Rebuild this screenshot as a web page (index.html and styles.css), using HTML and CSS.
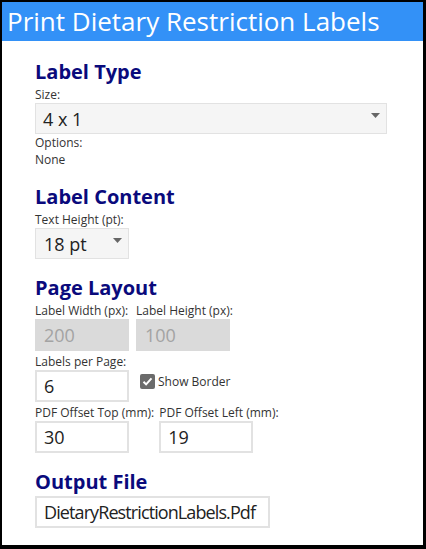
FILE: index.html
```html
<!DOCTYPE html>
<html lang="en">

<head>
  <meta charset="UTF-8">
  <meta name="viewport" content="width=device-width, initial-scale=1.0">
  <title>Print Dietary Restriction Labels</title>
  <link rel="stylesheet" href="styles.css">
</head>

<body>

  <div class="window">
    <div class="title-bar">Print Dietary Restriction Labels</div>

    <div class="content">
      <!-- 標籤種類 -->
      <section class="group">
        <h2>Label Type</h2>
        <p class="field-label">Size:</p>
        <div class="select select-wide">
          <span>4 x 1</span>
          <svg class="arrow" width="9" height="5" viewBox="0 0 9 5"><path d="M0 0h9L4.5 5z" /></svg>
        </div>
        <p class="field-label options-label">Options:</p>
        <p class="field-label">None</p>
      </section>

      <!-- 標籤內容 -->
      <section class="group">
        <h2>Label Content</h2>
        <p class="field-label">Text Height (pt):</p>
        <div class="select select-small">
          <span>18 pt</span>
          <svg class="arrow" width="9" height="5" viewBox="0 0 9 5"><path d="M0 0h9L4.5 5z" /></svg>
        </div>
      </section>

      <!-- 頁面配置 -->
      <section class="group">
        <h2>Page Layout</h2>
        <div class="row">
          <div class="field">
            <p class="field-label">Label Width (px):</p>
            <input class="text-box" type="text" value="200" disabled>
          </div>
          <div class="field">
            <p class="field-label">Label Height (px):</p>
            <input class="text-box" type="text" value="100" disabled>
          </div>
        </div>
        <div class="row row-check">
          <div class="field">
            <p class="field-label">Labels per Page:</p>
            <input class="text-box" type="text" value="6">
          </div>
          <label class="check">
            <span class="check-box">
              <svg width="15" height="15" viewBox="0 0 15 15"><path d="M3.5 7.8l2.6 2.6 5.4-6" /></svg>
            </span>
            Show Border
          </label>
        </div>
        <div class="row row-offset">
          <div class="field">
            <p class="field-label">PDF Offset Top (mm):</p>
            <input class="text-box" type="text" value="30">
          </div>
          <div class="field">
            <p class="field-label">PDF Offset Left (mm):</p>
            <input class="text-box" type="text" value="19">
          </div>
        </div>
      </section>

      <!-- 輸出檔案 -->
      <section class="group">
        <h2>Output File</h2>
        <input class="text-box text-file" type="text" value="DietaryRestrictionLabels.Pdf">
      </section>
    </div>
  </div>

</body>

</html>
```

FILE: styles.css
```css
* {
  margin: 0;
  padding: 0;
  box-sizing: border-box;
}

body {
  font-family: "Open Sans", "Noto Sans", sans-serif;
  color: #333;
  overflow: hidden;
}

.window {
  height: 549px;
  background: #fff;
  border-style: solid;
  border-color: #000;
  border-width: 2px 3px 4px 2px;
}

.title-bar {
  height: 39px;
  padding-left: 5px;
  background: #3391f7;
  color: #fff;
  font-size: 26px;
  line-height: 39px;
  white-space: nowrap;
}

.content {
  padding-left: 33px;
}

.group {
  margin-top: 18px;
}

.group:first-child {
  margin-top: 20px;
}

h2 {
  margin-bottom: 3px;
  color: #0a0a7c;
  font-size: 20px;
  line-height: 22px;
  font-weight: bold;
}

.field-label {
  font-size: 12px;
  line-height: 17px;
  color: #333;
  white-space: nowrap;
}

/* --------下拉選單--------- */
.select {
  display: flex;
  align-items: center;
  justify-content: space-between;
  height: 31px;
  padding: 0 6px 0 7px;
  background: #f5f5f5;
  border: 1px solid #e2e2e2;
  font-size: 18px;
  color: #222;
}

.select-wide {
  width: 352px;
}

.select-small {
  width: 94px;
  padding-left: 8px;
}

.arrow {
  fill: #666;
  margin-top: -6px;
}

/* --------輸入框--------- */
.row {
  display: flex;
  gap: 7px;
  margin-bottom: 2px;
}

.field {
  display: flex;
  flex-direction: column;
}

.text-box {
  width: 94px;
  height: 32px;
  padding: 0 7px;
  border: 2px solid #e2e2e2;
  background: #fff;
  font-family: inherit;
  font-size: 18px;
  color: #222;
  outline: none;
}

.text-box:disabled {
  background: #dadada;
  border-color: #dadada;
  color: #a3a3a3;
}

.row-check {
  gap: 11px;
  align-items: flex-end;
}

.check {
  display: flex;
  align-items: center;
  gap: 3px;
  margin-bottom: 12px;
  font-size: 12px;
  color: #333;
}

.check-box {
  display: flex;
  width: 15px;
  height: 15px;
  border-radius: 2px;
  background: #6b6b6b;
}

.check-box path {
  fill: none;
  stroke: #fff;
  stroke-width: 2;
}

.row-offset {
  gap: 5px;
}

.text-file {
  width: 235px;
  letter-spacing: -0.9px;
}
```
